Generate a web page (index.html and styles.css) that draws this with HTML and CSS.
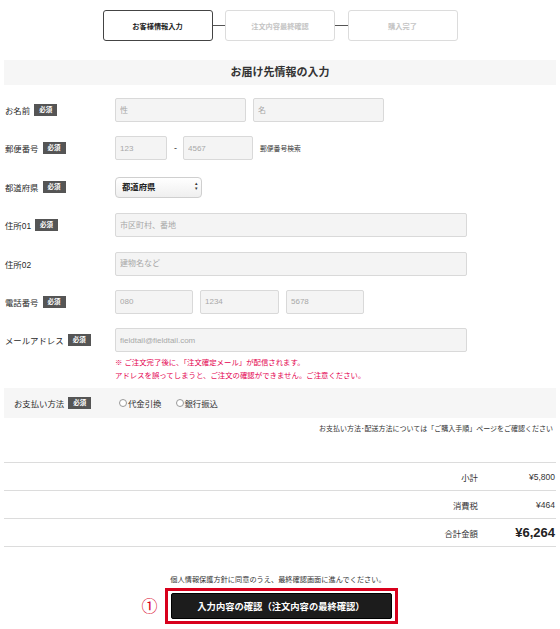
FILE: index.html
```html
<!DOCTYPE html>
<html lang="ja">
<head>
<meta charset="utf-8">
<title>お届け先情報の入力</title>
<link rel="stylesheet" href="styles.css">
</head>
<body>
<div class="page">
  <div class="steps">
    <div class="step step-active">お客様情報入力</div>
    <div class="step-line"></div>
    <div class="step">注文内容最終確認</div>
    <div class="step-line"></div>
    <div class="step">購入完了</div>
  </div>

  <h2 class="section-title">お届け先情報の入力</h2>

  <div class="form">
    <div class="row">
      <div class="label">お名前<span class="req">必須</span></div>
      <div class="fields">
        <input class="inp w131" type="text" placeholder="性">
        <input class="inp w131" type="text" placeholder="名">
      </div>
    </div>
    <div class="row">
      <div class="label">郵便番号<span class="req">必須</span></div>
      <div class="fields">
        <input class="inp w52" type="text" placeholder="123">
        <span class="dash">-</span>
        <input class="inp w70" type="text" placeholder="4567">
        <span class="zip-search">郵便番号検索</span>
      </div>
    </div>
    <div class="row">
      <div class="label">都道府県<span class="req">必須</span></div>
      <div class="fields">
        <div class="select-wrap">
          <select class="sel"><option>都道府県</option></select>
          <span class="sel-arrow">&#x25B4;<br>&#x25BE;</span>
        </div>
      </div>
    </div>
    <div class="row">
      <div class="label">住所01<span class="req">必須</span></div>
      <div class="fields">
        <input class="inp w352" type="text" placeholder="市区町村、番地">
      </div>
    </div>
    <div class="row">
      <div class="label">住所02</div>
      <div class="fields">
        <input class="inp w352" type="text" placeholder="建物名など">
      </div>
    </div>
    <div class="row">
      <div class="label">電話番号<span class="req">必須</span></div>
      <div class="fields">
        <input class="inp w78" type="text" placeholder="080">
        <input class="inp w79" type="text" placeholder="1234">
        <input class="inp w78" type="text" placeholder="5678">
      </div>
    </div>
    <div class="row">
      <div class="label">メールアドレス<span class="req">必須</span></div>
      <div class="fields">
        <input class="inp w352" type="text" placeholder="fieldtail@fieldtail.com">
      </div>
    </div>
  </div>

  <div class="mail-note">
    <p>※ ご注文完了後に、「注文確定メール」が配信されます。</p>
    <p>アドレスを誤ってしまうと、ご注文の確認ができません。ご注意ください。</p>
  </div>

  <div class="pay">
    <div class="pay-label">お支払い方法<span class="req">必須</span></div>
    <label class="radio"><input type="radio" name="pay">代金引換</label>
    <label class="radio"><input type="radio" name="pay">銀行振込</label>
  </div>
  <p class="pay-note">お支払い方法･配送方法については「ご購入手順」ページをご確認ください</p>

  <div class="totals">
    <div class="t-row"><span class="t-label">小計</span><span class="t-val">¥5,800</span></div>
    <div class="t-row"><span class="t-label">消費税</span><span class="t-val">¥464</span></div>
    <div class="t-row"><span class="t-label">合計金額</span><span class="t-val t-big">¥6,264</span></div>
  </div>

  <p class="agree">個人情報保護方針に同意のうえ、最終確認画面に進んでください。</p>
  <div class="submit-area">
    <div class="mark">
      <span class="mark-num">①</span>
      <button class="submit" type="button">入力内容の確認（注文内容の最終確認）</button>
    </div>
  </div>
</div>
</body>
</html>
```

FILE: styles.css
```css
* { box-sizing: border-box; }
html, body { margin: 0; padding: 0; background: #fff; }
body {
  font-family: "Liberation Sans", "Noto Sans CJK JP", sans-serif;
  color: #333;
  width: 560px;
}
.page { padding: 10px 4px 0; }

/* steps */
.steps { display: flex; justify-content: center; align-items: center; }
.step {
  width: 110px; height: 31px;
  border: 1px solid #dcdcdc; border-radius: 3px;
  display: flex; align-items: center; justify-content: center;
  font-size: 7.2px; font-weight: bold; color: #c4c4c4;
  background: #fff;
}
.step-active { border-color: #444; color: #222; }
.step-line { width: 12.5px; height: 1px; background: #555; }

.section-title {
  margin: 19px 0 0;
  height: 25px; line-height: 25px;
  background: #f6f6f6;
  text-align: center;
  font-size: 11px; font-weight: bold; color: #333;
}

/* form */
.form { margin-top: 13px; display: flex; flex-direction: column; gap: 14.4px; }
.row { display: flex; align-items: center; height: 24px; }
.label {
  width: 111px; padding-left: 1px;
  display: flex; align-items: center; gap: 4px;
  font-size: 8.4px; color: #2a2a2a;
}
.req {
  display: inline-block;
  background: #555; color: #fff;
  font-size: 6.5px; font-weight: bold;
  padding: 0 5px; height: 12px; line-height: 12px;
}
.fields { display: flex; align-items: center; gap: 7px; }
.inp {
  height: 24px; padding: 0 4px;
  background: #f4f4f4;
  border: 1px solid #d9d9d9; border-radius: 2px;
  font-family: inherit; font-size: 8px; color: #333;
  outline: none;
}
.inp::placeholder { color: #a8a8a8; }
.w131 { width: 131px; }
.w52 { width: 52px; }
.w70 { width: 70px; }
.w352 { width: 352px; }
.w78 { width: 78px; }
.w79 { width: 79px; }
.dash { font-size: 9px; color: #333; width: 2px; text-align: center; }
.zip-search { font-size: 6.8px; color: #333; }

.select-wrap { position: relative; width: 87px; height: 21px; }
.sel {
  -webkit-appearance: none; appearance: none;
  width: 87px; height: 21px;
  padding: 0 6px;
  border: 1px solid #cfcfcf; border-radius: 4px;
  background: linear-gradient(#ffffff, #efefef);
  font-family: inherit; font-size: 8.4px; font-weight: bold; color: #222;
  outline: none;
}
.sel-arrow {
  position: absolute; right: 4px; top: 5px;
  font-size: 5px; line-height: 5px; color: #333;
  pointer-events: none;
}

.mail-note { margin: 4px 0 0 111px; }
.mail-note p {
  margin: 0; font-size: 7.4px; line-height: 13px; color: #e4004f;
}

/* payment */
.pay {
  margin-top: 6px;
  height: 30px;
  background: #f6f6f6;
  display: flex; align-items: center;
  padding-left: 10px;
}
.pay-label {
  width: 101px;
  display: flex; align-items: center; gap: 4px;
  font-size: 8.4px; color: #2a2a2a;
}
.radio {
  display: flex; align-items: center;
  font-size: 8.4px; color: #333;
  margin-right: 10px;
}
.radio input {
  -webkit-appearance: none; appearance: none;
  width: 8px; height: 8px; margin: 0 1px 0 4px;
  border: 1px solid #999; border-radius: 50%;
  background: #fff;
}
.pay-note {
  margin: 6px 3px 0 0;
  text-align: right;
  font-size: 7px; line-height: 10px; color: #333;
  white-space: nowrap;
}

/* totals */
.totals { margin-top: 28px; border-top: 1px solid #dcdcdc; }
.t-row {
  display: flex; justify-content: flex-end; align-items: center;
  height: 28px;
  border-bottom: 1px solid #dcdcdc;
}
.t-label { font-size: 8.4px; color: #333; text-align: right; }
.t-val {
  width: 78px; text-align: right;
  font-size: 8.5px; color: #333; padding-right: 1px;
}
.t-big { font-size: 13px; font-weight: bold; color: #222; }

/* submit */
.agree {
  margin: 28px 0 0;
  text-align: center;
  font-size: 7.2px; line-height: 10px; color: #333;
  padding-right: 4px;
}
.submit-area { display: flex; justify-content: center; margin-top: 3px; padding-left: 2px; }
.mark {
  position: relative;
  border: 3px solid #d8001c;
  padding: 2px 3px;
}
.mark-num {
  position: absolute; left: -26px; top: 4px;
  font-family: "Noto Sans CJK JP", sans-serif;
  font-size: 16px; line-height: 20px; color: #d8001c;
}
.submit {
  display: block;
  width: 221px; height: 26px;
  background: #1c1c1c; color: #fff;
  border: 1px solid #000; border-radius: 2px;
  font-family: "Noto Sans CJK JP", sans-serif;
  font-size: 9.3px; font-weight: bold;
  padding: 0;
}
```
